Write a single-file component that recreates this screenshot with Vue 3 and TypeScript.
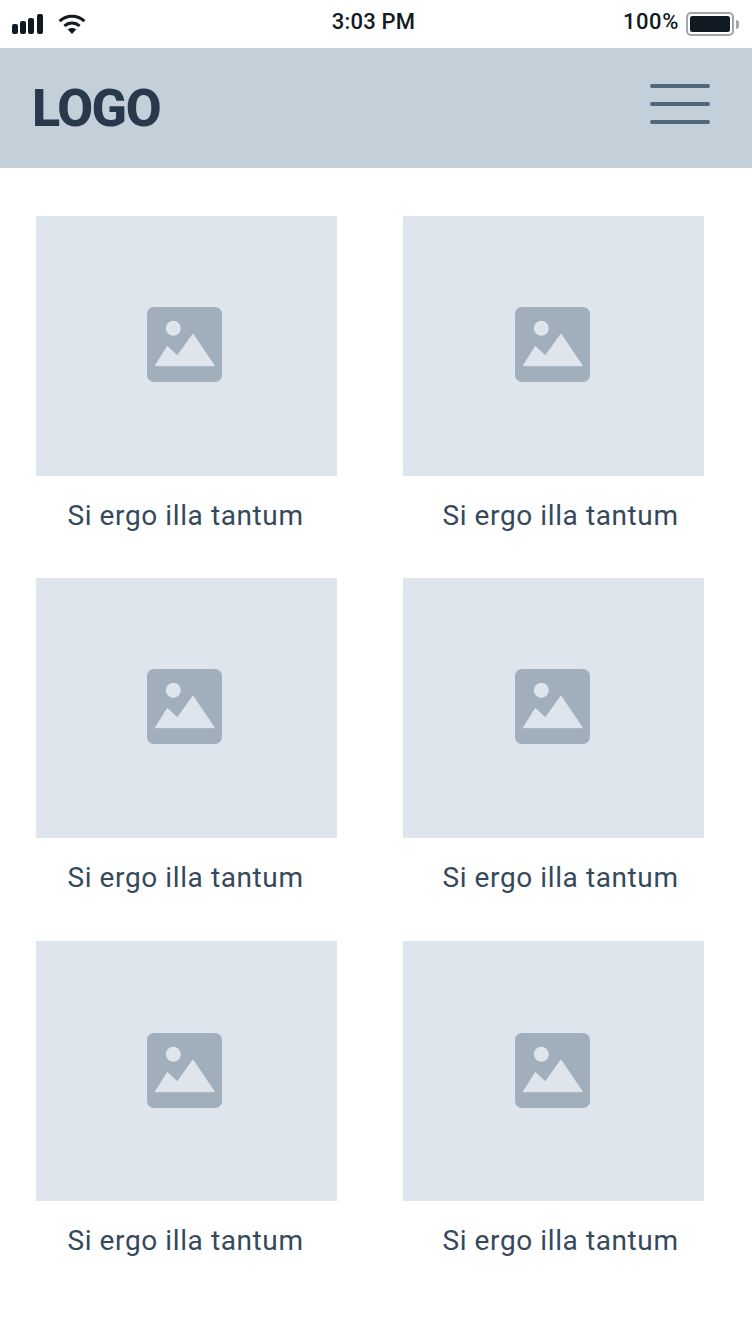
<template>
  <div class="page">
    <div class="status-bar">
      <div class="status-left">
        <div class="signal">
          <span v-for="h in signalBars" :key="h" class="signal-bar" :style="{ height: `${h}px` }"></span>
        </div>
        <svg class="wifi" width="28" height="20" viewBox="0 0 28 20">
          <path d="M1.6 7.2C8.6 .6 19.4 .6 26.4 7.2" fill="none" stroke="#111a22" stroke-width="3" />
          <path d="M6.4 12C10.8 8 17.2 8 21.6 12" fill="none" stroke="#111a22" stroke-width="3" />
          <path d="M9.8 15.6C12.2 13.6 15.8 13.6 18.2 15.6L14 20Z" fill="#111a22" />
        </svg>
      </div>
      <div class="clock">3:03 PM</div>
      <div class="status-right">
        <span class="percent">100%</span>
        <div class="battery"><div class="battery-fill"></div></div>
        <div class="battery-nub"></div>
      </div>
    </div>

    <header class="header">
      <div class="logo">LOGO</div>
      <div class="menu">
        <span></span>
        <span></span>
        <span></span>
      </div>
    </header>

    <main class="grid">
      <div v-for="n in 6" :key="n" class="card">
        <div class="thumb">
          <svg width="75" height="75" viewBox="0 0 75 75">
            <rect width="75" height="75" rx="7" fill="#a0afbb" />
            <circle cx="26.3" cy="21.3" r="7.5" fill="#dfe5ed" />
            <path
              d="M8.2 58.7 20.4 39.4 30.4 48.7 46 27 67.4 58.7Z"
              fill="#dfe5ed"
              stroke="#dfe5ed"
              stroke-width="1"
              stroke-linejoin="round"
            />
          </svg>
        </div>
        <div class="label">Si ergo illa tantum</div>
      </div>
    </main>
  </div>
</template>

<script setup lang="ts">
const signalBars: number[] = [10, 13, 16, 20];
</script>

<style>
body {
  background: #fff;
}
</style>

<style scoped>
.page {
  width: 752px;
  height: 1336px;
  overflow: hidden;
  background: #fff;
  font-family: Roboto, "Liberation Sans", sans-serif;
}

/* Status bar */
.status-bar {
  height: 48px;
  display: grid;
  grid-template-columns: 1fr auto 1fr;
  align-items: center;
  color: #111a22;
}

.status-left {
  display: flex;
  align-items: center;
  gap: 15px;
  padding-left: 12px;
}

.signal {
  display: flex;
  align-items: flex-end;
  gap: 2.2px;
  height: 20px;
}

.signal-bar {
  width: 6px;
  background: #111a22;
  border-radius: 2px;
}

.clock {
  font-size: 22px;
  font-weight: 500;
  letter-spacing: 0.2px;
  line-height: 42px;
  height: 42px;
  margin-right: 5px;
  transform: translateY(-2px);
}

.status-right {
  display: flex;
  align-items: center;
  justify-content: flex-end;
  padding-right: 13px;
}

.percent {
  font-size: 22px;
  font-weight: 500;
  letter-spacing: 0.6px;
  line-height: 42px;
  height: 42px;
  margin-right: 7px;
  transform: translateY(-2px);
}

.battery {
  box-sizing: border-box;
  width: 48px;
  height: 24px;
  padding: 2px;
  border: 2px solid #a3a6a9;
  border-radius: 5px;
}

.battery-fill {
  height: 100%;
  background: #111a22;
  border-radius: 2.5px;
}

.battery-nub {
  width: 3px;
  height: 9px;
  margin-left: 2px;
  background: #a3a6a9;
  border-radius: 0 3px 3px 0;
}

/* Header */
.header {
  height: 120px;
  box-sizing: border-box;
  padding: 0 42px 0 32px;
  display: flex;
  align-items: center;
  justify-content: space-between;
  background: #c3cfd9;
}

.logo {
  font-size: 52px;
  font-weight: 800;
  letter-spacing: -1.4px;
  color: #27394a;
}

.menu {
  width: 60px;
  display: flex;
  flex-direction: column;
  gap: 14px;
  margin-top: -8px;
}

.menu span {
  height: 4px;
  border-radius: 2px;
  background: #52667a;
}

/* Grid */
.grid {
  display: grid;
  grid-template-columns: 301px 301px;
  grid-template-rows: 362px 363px 363px;
  column-gap: 66px;
  padding: 48px 0 0 36px;
}

.thumb {
  height: 260px;
  display: flex;
  align-items: center;
  justify-content: center;
  padding-bottom: 3px;
  box-sizing: border-box;
  background: #dfe5ed;
}

.thumb svg {
  margin-left: -4px;
}

.card:nth-child(even) .thumb svg {
  margin-left: -2px;
}

.card:nth-child(n + 5) .thumb svg {
  margin-top: 2px;
}

.label {
  margin-top: 21px;
  padding-right: 2px;
  text-align: center;
  font-size: 28px;
  line-height: 38px;
  letter-spacing: 0.6px;
  color: #35495c;
}

.card:nth-child(even) .label {
  padding-left: 14px;
  padding-right: 0;
}
</style>
